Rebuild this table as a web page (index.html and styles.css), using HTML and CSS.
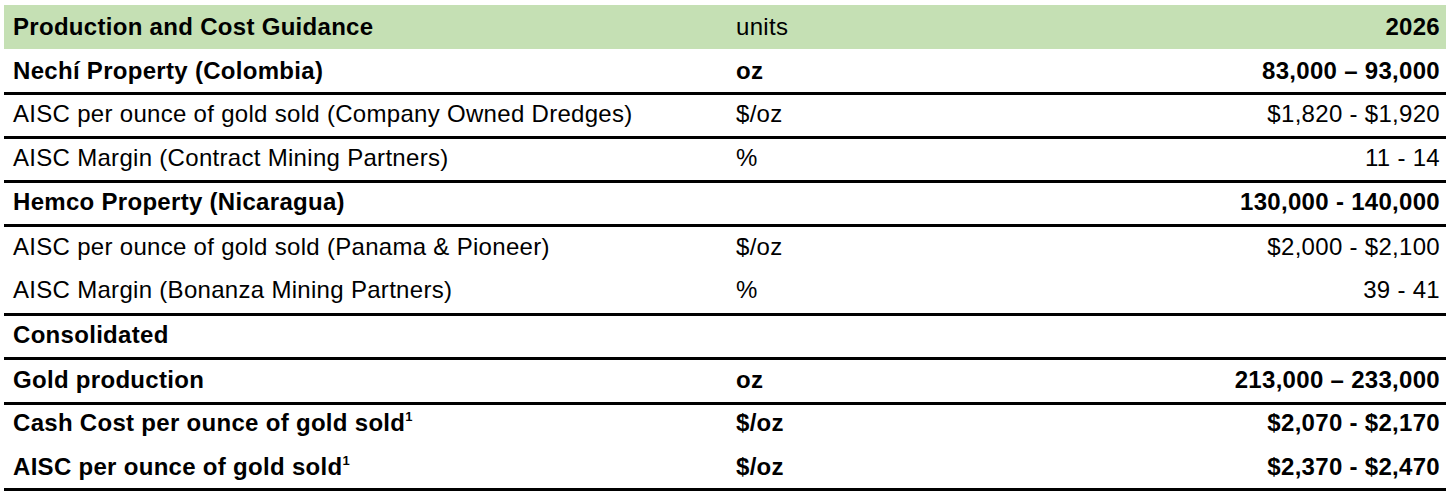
FILE: index.html
```html
<!DOCTYPE html>
<html>
<head>
<meta charset="utf-8">
<link rel="stylesheet" href="styles.css">
</head>
<body>
<div class="table">
  <div class="row head h44"><div class="c1 b">Production and Cost Guidance</div><div class="c2">units</div><div class="c3 b">2026</div></div>
  <div class="row line h43 b"><div class="c1">Nechí Property (Colombia)</div><div class="c2">oz</div><div class="c3">83,000 – 93,000</div></div>
  <div class="row line h41 up"><div class="c1">AISC per ounce of gold sold (Company Owned Dredges)</div><div class="c2">$/oz</div><div class="c3">$1,820 - $1,920</div></div>
  <div class="row line h41 up"><div class="c1">AISC Margin (Contract Mining Partners)</div><div class="c2">%</div><div class="c3">11 - 14</div></div>
  <div class="row line h41 b up"><div class="c1">Hemco Property (Nicaragua)</div><div class="c2"></div><div class="c3">130,000 - 140,000</div></div>
  <div class="row h43 up"><div class="c1">AISC per ounce of gold sold (Panama &amp; Pioneer)</div><div class="c2">$/oz</div><div class="c3">$2,000 - $2,100</div></div>
  <div class="row line h43 up"><div class="c1">AISC Margin (Bonanza Mining Partners)</div><div class="c2">%</div><div class="c3">39 - 41</div></div>
  <div class="row line h41 b up"><div class="c1">Consolidated</div><div class="c2"></div><div class="c3"></div></div>
  <div class="row line h42 b up1"><div class="c1">Gold production</div><div class="c2">oz</div><div class="c3">213,000 – 233,000</div></div>
  <div class="row h41 b up3"><div class="c1">Cash Cost per ounce of gold sold<sup>1</sup></div><div class="c2">$/oz</div><div class="c3">$2,070 - $2,170</div></div>
  <div class="row line h42 b"><div class="c1">AISC per ounce of gold sold<sup>1</sup></div><div class="c2">$/oz</div><div class="c3">$2,370 - $2,470</div></div>
</div>
</body>
</html>
```
FILE: styles.css
```css
html, body {
  margin: 0;
  padding: 0;
  background: #ffffff;
}
body {
  font-family: "Liberation Sans", Arial, sans-serif;
  font-size: 24px;
  letter-spacing: 0.3px;
  color: #000000;
}
.table {
  margin: 5px 0 0 4px;
  width: 1442px;
  display: flex;
  flex-direction: column;
}
.row {
  display: flex;
  align-items: center;
  box-sizing: content-box;
}
.head {
  background: #c5e0b4;
}
.line {
  border-bottom: 3px solid #000000;
}
.h44 { height: 44px; }
.h43 { height: 43px; }
.h42 { height: 42px; }
.h41 { height: 41px; }
.up > div { padding-bottom: 4px; }
.up1 > div { padding-bottom: 2px; }
.up3 > div { padding-bottom: 6px; }
.b { font-weight: bold; }
.c1 {
  width: 723px;
  padding-left: 9px;
  box-sizing: border-box;
  white-space: nowrap;
}
.c2 {
  width: 300px;
  padding-left: 9px;
  box-sizing: border-box;
}
.c3 {
  flex: 1;
  text-align: right;
  padding-right: 6px;
  white-space: nowrap;
}
sup {
  font-size: 13px;
  line-height: 0;
  vertical-align: 10px;
}
```
